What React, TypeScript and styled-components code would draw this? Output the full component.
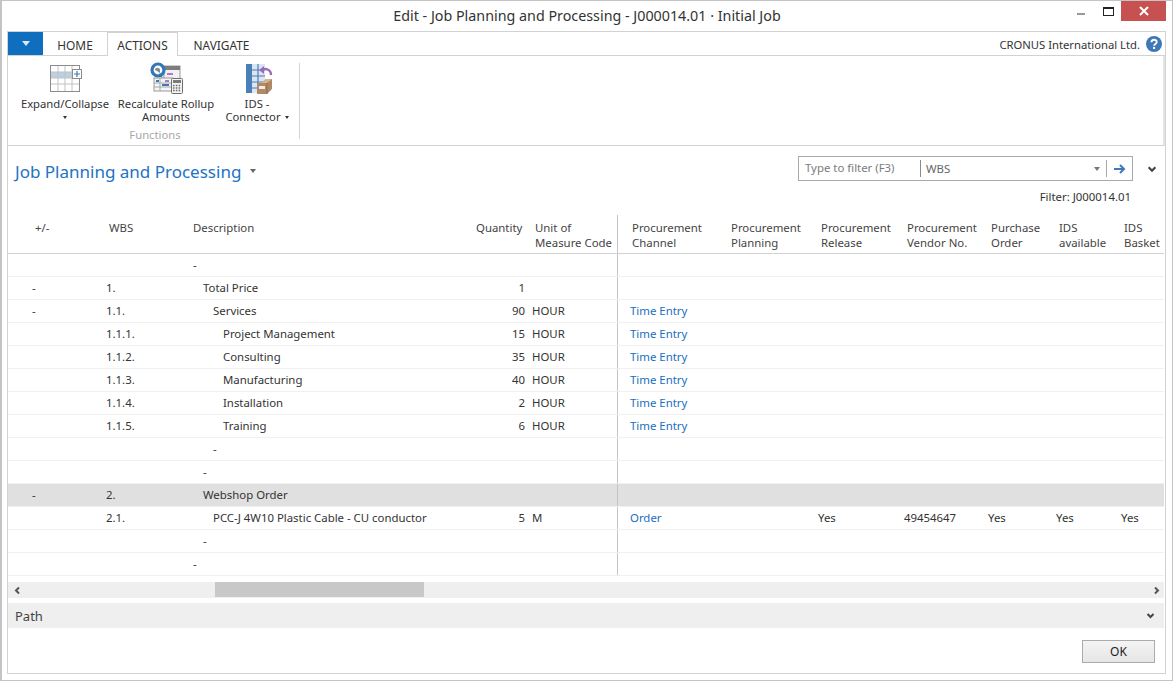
import React from 'react'
import styled, { createGlobalStyle } from 'styled-components'

const COLUMNS = '95px 84px 283px 59px 89px 107px 90px 86px 84px 68px 65px 45px'

type RowData = {
  toggle?: string
  wbs?: string
  level: number
  desc: string
  qty?: string
  unit?: string
  channel?: string
  release?: string
  vendor?: string
  purchase?: string
  available?: string
  basket?: string
  selected?: boolean
}

const rows: RowData[] = [
  { level: 0, desc: '-' },
  { toggle: '-', wbs: '1.', level: 1, desc: 'Total Price', qty: '1' },
  { toggle: '-', wbs: '1.1.', level: 2, desc: 'Services', qty: '90', unit: 'HOUR', channel: 'Time Entry' },
  { wbs: '1.1.1.', level: 3, desc: 'Project Management', qty: '15', unit: 'HOUR', channel: 'Time Entry' },
  { wbs: '1.1.2.', level: 3, desc: 'Consulting', qty: '35', unit: 'HOUR', channel: 'Time Entry' },
  { wbs: '1.1.3.', level: 3, desc: 'Manufacturing', qty: '40', unit: 'HOUR', channel: 'Time Entry' },
  { wbs: '1.1.4.', level: 3, desc: 'Installation', qty: '2', unit: 'HOUR', channel: 'Time Entry' },
  { wbs: '1.1.5.', level: 3, desc: 'Training', qty: '6', unit: 'HOUR', channel: 'Time Entry' },
  { level: 2, desc: '-' },
  { level: 1, desc: '-' },
  { toggle: '-', wbs: '2.', level: 1, desc: 'Webshop Order', selected: true },
  {
    wbs: '2.1.',
    level: 2,
    desc: 'PCC-J 4W10 Plastic Cable - CU conductor',
    qty: '5',
    unit: 'M',
    channel: 'Order',
    release: 'Yes',
    vendor: '49454647',
    purchase: 'Yes',
    available: 'Yes',
    basket: 'Yes',
  },
  { level: 1, desc: '-' },
  { level: 0, desc: '-' },
]

const GlobalStyle = createGlobalStyle`
  html, body {
    margin: 0;
    padding: 0;
    background: #fff;
    font-family: "Noto Sans", "Open Sans", sans-serif;
    font-size: 11.4px;
    color: #333;
  }
  * { box-sizing: border-box; }
`

const Window = styled.div`
  width: 1173px;
  height: 681px;
  display: flex;
  flex-direction: column;
  background: #fff;
  border: solid #c4c4c4;
  border-width: 1px 1px 1px 2px;
  overflow: hidden;
`
const TitleBar = styled.div`
  height: 30px;
  flex: none;
  display: flex;
  position: relative;
  justify-content: center;
  padding-top: 5px;
  font-size: 14.3px;
  line-height: 20px;
  color: #333;
`
const WindowButtons = styled.div`
  position: absolute;
  top: 0;
  left: 1070px;
  display: flex;
  align-items: flex-start;
`
const MinButton = styled.div`
  width: 8px;
  height: 2px;
  margin: 12px 0 0 5px;
  background: #999;
`
const MaxButton = styled.div`
  width: 11px;
  height: 9px;
  margin: 6px 0 0 18px;
  border: 1px solid #222;
  border-top-width: 2px;
`
const CloseButton = styled.div`
  width: 45px;
  height: 20px;
  margin-left: 7px;
  background: #c75050;
  color: #fff;
  display: flex;
  align-items: center;
  justify-content: center;
`
const Frame = styled.div`
  margin-left: 5px;
  width: 1159px;
  height: 643px;
  border: 1px solid #d2d2d2;
  display: flex;
  flex-direction: column;
`
const TabStrip = styled.div`
  height: 24px;
  flex: none;
  display: flex;
  align-items: stretch;
  border-bottom: 1px solid #d2d2d2;
  padding-right: 3px;
`
const FileButton = styled.div`
  width: 35px;
  height: 23px;
  background: #106ebe;
  display: flex;
  align-items: center;
  justify-content: center;
`
const FileCaret = styled.div`
  width: 0;
  height: 0;
  border-left: 4px solid transparent;
  border-right: 4px solid transparent;
  border-top: 5px solid #dce9f5;
`
const Tab = styled.div<{ $active?: boolean; $width: number }>`
  width: ${(p) => p.$width}px;
  height: ${(p) => (p.$active ? 24 : 23)}px;
  font-size: 11.9px;
  line-height: 26px;
  text-align: center;
  color: #333;
  background: #fff;
  ${(p) => p.$active && 'border: 1px solid #d2d2d2; border-bottom: none; line-height: 25px;'}
`
const Company = styled.div`
  margin-left: auto;
  display: flex;
  align-items: center;
  gap: 6px;
  font-size: 11.25px;
  height: 23px;
  padding-top: 1px;
`
const Ribbon = styled.div`
  height: 90px;
  flex: none;
  border-bottom: 1px solid #d2d2d2;
  border-right: 2px solid #e4e4e4;
  padding: 7px 0 0 9px;
  display: flex;
  align-items: flex-start;
`
const RibbonGroup = styled.div`
  width: 283px;
  height: 76px;
  border-right: 1px solid #d4d4d4;
  display: flex;
  flex-direction: column;
`
const RibbonButtons = styled.div`
  display: flex;
  height: 63px;
`
const RibbonButton = styled.div<{ $width: number }>`
  width: ${(p) => p.$width}px;
  display: flex;
  flex-direction: column;
  align-items: center;
  margin-top: -1px;
  text-align: center;
  font-size: 11.25px;
  line-height: 13px;
  color: #333;
`
const IconSlot = styled.div<{ $top?: number; $shift?: number }>`
  height: 34px;
  margin-bottom: 1px;
  padding: ${(p) => p.$top ?? 0}px 0 0 ${(p) => p.$shift ?? 0}px;
  display: flex;
  align-items: flex-start;
  justify-content: center;
`
const SmallCaret = styled.span`
  display: inline-block;
  width: 0;
  height: 0;
  margin-left: 4px;
  vertical-align: 2px;
  border-left: 2.5px solid transparent;
  border-right: 2.5px solid transparent;
  border-top: 3px solid #333;
`
const CaretLine = styled.div`
  height: 13px;
  margin-left: -4px;
`
const GroupLabel = styled.div`
  width: 276px;
  margin-top: 5px;
  text-align: center;
  color: #a8a8a8;
  font-size: 11.25px;
  line-height: 14px;
`
const PageHead = styled.div`
  height: 69px;
  flex: none;
  display: flex;
  justify-content: space-between;
  padding: 10px 8px 0 7px;
`
const PageTitle = styled.div`
  display: flex;
  align-items: flex-start;
  font-size: 17px;
  line-height: 31px;
  color: #2073c4;
`
const TitleCaret = styled.span`
  width: 0;
  height: 0;
  margin: 13px 0 0 9px;
  border-left: 3px solid transparent;
  border-right: 3px solid transparent;
  border-top: 4px solid #666;
`
const FilterArea = styled.div`
  display: flex;
  flex-direction: column;
`
const SearchRow = styled.div`
  display: flex;
  align-items: center;
`
const SearchBox = styled.div`
  width: 335px;
  height: 25px;
  border: 1px solid #a9a9a9;
  display: flex;
  align-items: center;
  color: #7b7b7b;
`
const SearchHint = styled.div`
  width: 122px;
  height: 17px;
  line-height: 15px;
  padding-left: 6px;
  border-right: 1px solid #8a8a8a;
  white-space: nowrap;
`
const SearchField = styled.div`
  flex: 1;
  padding-left: 5px;
  color: #666;
`
const SearchCaret = styled.div`
  width: 0;
  height: 0;
  margin-right: 6px;
  border-left: 3.5px solid transparent;
  border-right: 3.5px solid transparent;
  border-top: 4px solid #777;
`
const SearchGo = styled.div`
  width: 26px;
  height: 17px;
  border-left: 1px solid #a9a9a9;
  display: flex;
  align-items: center;
  justify-content: center;
`
const SearchChevron = styled.div`
  margin-left: 14px;
  display: flex;
`
const FilterLabel = styled.div`
  width: 335px;
  margin-top: 8px;
  padding-right: 2px;
  text-align: right;
  line-height: 16px;
  color: #333;
`
const HeaderRow = styled.div`
  flex: none;
  height: 39px;
  display: grid;
  grid-template-columns: ${COLUMNS};
  border-bottom: 1px solid #d2d2d2;
  margin-right: 1px;
`
const HeaderCell = styled.div<{ $right?: boolean; $divider?: boolean; $lead?: number }>`
  padding: 5px 8px 0 ${(p) => p.$lead ?? 6}px;
  line-height: 15px;
  white-space: pre;
  color: #444;
  ${(p) => p.$right && 'text-align: right;'}
  ${(p) => p.$divider && 'border-right: 1px solid #c4c4c4;'}
`
const BodyRow = styled.div<{ $selected?: boolean }>`
  flex: none;
  height: 23px;
  display: grid;
  grid-template-columns: ${COLUMNS};
  border-bottom: 1px solid #f0f0f0;
  margin-right: 1px;
  background: ${(p) => (p.$selected ? '#e0e0e0' : '#fff')};
`
const Cell = styled.div<{ $right?: boolean; $divider?: boolean; $lead?: number; $link?: boolean }>`
  padding: 0 4px 0 ${(p) => p.$lead ?? 3}px;
  line-height: 21px;
  white-space: nowrap;
  color: ${(p) => (p.$link ? '#1a6ec0' : '#333')};
  ${(p) => p.$right && 'text-align: right;'}
  ${(p) => p.$divider && 'border-right: 1px solid #c4c4c4;'}
`
const ScrollBar = styled.div`
  flex: none;
  height: 16px;
  margin: 6px 1px 0 0;
  background: #efefef;
  display: flex;
  align-items: center;
  justify-content: space-between;
  position: relative;
  padding: 0 3px 0 5px;
`
const ScrollThumb = styled.div<{ $left: number; $width: number }>`
  position: absolute;
  top: 0;
  left: ${(p) => p.$left}px;
  width: ${(p) => p.$width}px;
  height: 15px;
  background: #c8c8c8;
`
const PathBar = styled.div`
  flex: none;
  height: 25px;
  margin: 5px 1px 0 0;
  padding: 0 9px 0 7px;
  background: #efefef;
  display: flex;
  align-items: center;
  justify-content: space-between;
  font-size: 13px;
  color: #444;
`
const Footer = styled.div`
  flex: 1;
  display: flex;
  justify-content: flex-end;
  align-items: flex-start;
  padding: 12px 10px 0 0;
`
const OkButton = styled.div`
  width: 73px;
  height: 23px;
  border: 1px solid #ababab;
  background: linear-gradient(#f4f4f4, #e6e6e6);
  text-align: center;
  line-height: 21px;
  font-size: 12px;
  color: #222;
`

function Chevron({ dir, color = '#555', size = 9 }: { dir: 'left' | 'right' | 'down'; color?: string; size?: number }) {
  const d = dir === 'left' ? 'M6 1.5 L3 4.5 L6 7.5' : dir === 'right' ? 'M3 1.5 L6 4.5 L3 7.5' : 'M1.5 3 L4.5 6 L7.5 3'
  return (
    <svg width={size} height={size} viewBox="0 0 9 9">
      <path d={d} fill="none" stroke={color} strokeWidth="2" />
    </svg>
  )
}

function HelpIcon() {
  return (
    <svg width="16" height="16" viewBox="0 0 17 17">
      <circle cx="8.5" cy="8.5" r="8.5" fill="#3f78b8" />
      <path d="M5.8 6.6 C5.8 3.2 11.4 3.2 11.4 6.4 C11.4 8.4 8.6 8.4 8.6 10.4" fill="none" stroke="#fff" strokeWidth="2" />
      <rect x="7.5" y="11.6" width="2.2" height="2.2" fill="#fff" />
    </svg>
  )
}

function ExpandIcon() {
  return (
    <svg width="33" height="27" viewBox="0 0 33 27">
      <rect x="1" y="7" width="28" height="6" fill="#bcd0e5" />
      <path d="M1 7H29M1 13H29M1 19H29M8 1V26M15 1V26M22 1V26" stroke="#c2c2c2" strokeWidth="1" fill="none" />
      <rect x="0.5" y="0.5" width="29" height="26" fill="none" stroke="#8c8c8c" strokeWidth="1" />
      <rect x="22.5" y="4.5" width="9" height="9" fill="#fff" stroke="#8c8c8c" strokeWidth="1" />
      <path d="M27 6V12M24 9H30" stroke="#3f78b8" strokeWidth="1.2" />
    </svg>
  )
}

function RecalcIcon() {
  return (
    <svg width="33" height="32" viewBox="0 0 33 32">
      <rect x="14" y="4" width="16" height="18" fill="#f2eff5" stroke="#9a9a9a" />
      <rect x="14" y="4" width="16" height="4" fill="#7d7d7d" />
      <rect x="17" y="11" width="6" height="2" fill="#a77fc0" />
      <circle cx="8" cy="8" r="6" fill="#fff" stroke="#2f77b5" strokeWidth="3.2" />
      <path d="M5 8 C5 5 10 5 10 8 L10 11 L7 9" fill="#7d8b96" />
      <path d="M8 14 L13 16 L10 11 Z" fill="#2f77b5" />
      <rect x="4" y="16" width="19" height="13" fill="#f5f5f5" stroke="#9a9a9a" />
      <path d="M4 21H23M4 25H23M10 16V29" stroke="#a8a8a8" fill="none" />
      <rect x="6" y="18" width="3" height="2" fill="#3f78b8" />
      <rect x="12" y="22" width="7" height="2" fill="#3f78b8" />
      <rect x="15" y="18" width="4" height="2" fill="#a77fc0" />
      <rect x="21.5" y="16.5" width="11" height="15" rx="1" fill="#f4f4f4" stroke="#6e6e6e" />
      <rect x="23" y="18" width="8" height="3" fill="#7a7a7a" />
      <path d="M23 23.5H31M23 26H31M23 28.5H31" stroke="#6e6e6e" strokeWidth="1.4" strokeDasharray="1.6 1.2" />
    </svg>
  )
}

function ConnectorIcon() {
  return (
    <svg width="28" height="31" viewBox="0 0 28 31">
      <rect x="1" y="1" width="19" height="29" fill="#4a7fb8" />
      <rect x="7" y="1" width="13" height="29" fill="#dbe6f2" />
      <path d="M7 7H20M7 13H20M7 19H20M7 25H20M13 1V30" stroke="#4a7fb8" strokeWidth="1.2" />
      <path d="M26 12 C26 6 20 5 17 7" fill="none" stroke="#9b6bb8" strokeWidth="2.4" />
      <path d="M14 7 L19 3 L19 11 Z" fill="#9b6bb8" />
      <path d="M16 20 L21 16 L27 16 L27 26 L22 31 L12 31 L12 20 Z" fill="#b08a66" />
      <path d="M12 20 L22 20 L27 16 L21 16 L16 20" fill="#d7b48f" />
      <path d="M22 20V31" stroke="#8a6a4c" />
      <rect x="14" y="23" width="6" height="3" fill="#f4ece2" />
    </svg>
  )
}

export default function App() {
  return (
    <>
      <GlobalStyle />
      <Window>
        <TitleBar>
          Edit - Job Planning and Processing - J000014.01 · Initial Job
          <WindowButtons>
            <MinButton />
            <MaxButton />
            <CloseButton>
              <svg width="10" height="10" viewBox="0 0 10 10">
                <path d="M1 1L9 9M9 1L1 9" stroke="#fff" strokeWidth="2" />
              </svg>
            </CloseButton>
          </WindowButtons>
        </TitleBar>
        <Frame>
          <TabStrip>
            <FileButton>
              <FileCaret />
            </FileButton>
            <Tab $width={64}>HOME</Tab>
            <Tab $width={71} $active>
              ACTIONS
            </Tab>
            <Tab $width={87}>NAVIGATE</Tab>
            <Company>
              CRONUS International Ltd.
              <HelpIcon />
            </Company>
          </TabStrip>
          <Ribbon>
            <RibbonGroup>
              <RibbonButtons>
                <RibbonButton $width={96}>
                  <IconSlot $top={3} $shift={2}>
                    <ExpandIcon />
                  </IconSlot>
                  Expand/Collapse
                  <CaretLine>
                    <SmallCaret />
                  </CaretLine>
                </RibbonButton>
                <RibbonButton $width={106}>
                  <IconSlot>
                    <RecalcIcon />
                  </IconSlot>
                  Recalculate Rollup
                  <br />
                  Amounts
                </RibbonButton>
                <RibbonButton $width={76}>
                  <IconSlot $top={1} $shift={4}>
                    <ConnectorIcon />
                  </IconSlot>
                  IDS -
                  <br />
                  <span>
                    Connector
                    <SmallCaret />
                  </span>
                </RibbonButton>
              </RibbonButtons>
              <GroupLabel>Functions</GroupLabel>
            </RibbonGroup>
          </Ribbon>
          <PageHead>
            <PageTitle>
              Job Planning and Processing
              <TitleCaret />
            </PageTitle>
            <FilterArea>
              <SearchRow>
                <SearchBox>
                  <SearchHint>Type to filter (F3)</SearchHint>
                  <SearchField>WBS</SearchField>
                  <SearchCaret />
                  <SearchGo>
                    <svg width="12" height="10" viewBox="0 0 12 10">
                      <path d="M0 5H9M6 1L10 5L6 9" fill="none" stroke="#3f78b8" strokeWidth="2" />
                    </svg>
                  </SearchGo>
                </SearchBox>
                <SearchChevron>
                  <Chevron dir="down" color="#444" size={10} />
                </SearchChevron>
              </SearchRow>
              <FilterLabel>Filter: J000014.01</FilterLabel>
            </FilterArea>
          </PageHead>
          <HeaderRow>
            <HeaderCell $lead={27}>+/-</HeaderCell>
            <HeaderCell>WBS</HeaderCell>
            <HeaderCell>Description</HeaderCell>
            <HeaderCell $right>Quantity</HeaderCell>
            <HeaderCell $divider>{'Unit of\nMeasure Code'}</HeaderCell>
            <HeaderCell $lead={14}>{'Procurement\nChannel'}</HeaderCell>
            <HeaderCell>{'Procurement\nPlanning'}</HeaderCell>
            <HeaderCell>{'Procurement\nRelease'}</HeaderCell>
            <HeaderCell>{'Procurement\nVendor No.'}</HeaderCell>
            <HeaderCell>{'Purchase\nOrder'}</HeaderCell>
            <HeaderCell>{'IDS\navailable'}</HeaderCell>
            <HeaderCell>{'IDS\nBasket'}</HeaderCell>
          </HeaderRow>
          {rows.map((row, i) => (
            <BodyRow key={i} $selected={row.selected}>
              <Cell $lead={24}>{row.toggle}</Cell>
              <Cell>{row.wbs}</Cell>
              <Cell $lead={6 + row.level * 10}>{row.desc}</Cell>
              <Cell $right>{row.qty}</Cell>
              <Cell $divider>{row.unit}</Cell>
              <Cell $lead={12} $link>
                {row.channel}
              </Cell>
              <Cell />
              <Cell>{row.release}</Cell>
              <Cell>{row.vendor}</Cell>
              <Cell>{row.purchase}</Cell>
              <Cell>{row.available}</Cell>
              <Cell>{row.basket}</Cell>
            </BodyRow>
          ))}
          <ScrollBar>
            <Chevron dir="left" />
            <ScrollThumb $left={207} $width={209} />
            <Chevron dir="right" />
          </ScrollBar>
          <PathBar>
            Path
            <Chevron dir="down" color="#444" />
          </PathBar>
          <Footer>
            <OkButton>OK</OkButton>
          </Footer>
        </Frame>
      </Window>
    </>
  )
}
